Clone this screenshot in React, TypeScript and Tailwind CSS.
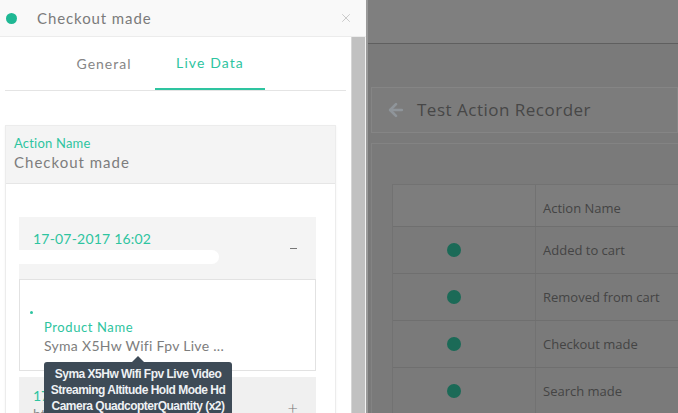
import { ArrowLeft, X } from "lucide-react";

const rows = ["Added to cart", "Removed from cart", "Checkout made", "Search made"];

const SidePanel = () => {
  return (
    <div className="relative w-[366px] h-full flex flex-col bg-white font-['Lato','Noto_Sans',sans-serif]">
      <div className="h-[37px] shrink-0 flex items-center bg-[#f9f9f9] border-b border-[#ececec]">
        <span className="ml-[6px] w-[11px] h-[11px] rounded-full bg-[#1fb894]" />
        <span className="ml-[20px] text-[15px] text-[#7b7b7b] tracking-[0.9px]">Checkout made</span>
        <X className="ml-auto mr-[13px] size-[14px] text-[#c4c4c4]" strokeWidth={1.5} />
      </div>

      <div className="flex flex-1 min-h-0">
        <div className="w-[351px] flex flex-col overflow-hidden">
          <div className="mx-[5px] h-[54px] shrink-0 flex border-b border-[#e4e4e4] pl-[40px]">
            <div className="w-[110px] flex items-center justify-center pl-[8px] text-[14px] text-[#868686] tracking-[1px]">General</div>
            <div className="w-[110px] flex items-center justify-center text-[14px] text-[#2ec4a0] tracking-[1.1px] border-b-2 border-[#2ec4a0]">Live Data</div>
          </div>

          <div className="mt-[34px] mx-[5px] w-[331px] border border-[#ececec] shadow-[0_1px_2px_rgba(0,0,0,0.06)]">
            <div className="h-[58px] bg-[#f4f4f4] border-b border-[#e6e6e6] pl-[8px] pt-[9px]">
              <div className="text-[13px] leading-[17px] text-[#2ec4a0] tracking-[0.2px]">Action Name</div>
              <div className="text-[15px] leading-[20px] text-[#7d7d7d] tracking-[1px]">Checkout made</div>
            </div>
            <div className="pt-[33px] pl-[13px] pr-[19px] pb-[20px] flex flex-col gap-[6px]">
              <div>
                <div className="relative h-[62px] bg-[#f4f4f4]">
                  <div className="pl-[14px] pt-[13px] text-[14px] leading-[18px] text-[#2ec4a0] tracking-[0.2px]">17-07-2017 16:02</div>
                  <div className="mt-[2px] w-[200px] h-[14px] bg-white rounded-r-full" />
                  <span className="absolute right-[19px] top-[31px] w-[7px] h-px bg-[#777]" />
                </div>
                <div className="h-[92px] bg-white border border-[#e2e2e2] relative">
                  <span className="absolute left-[10px] top-[31px] w-[3px] h-[3px] rounded-full bg-[#2ec4a0]" />
                  <div className="pl-[24px] pt-[39px]">
                    <div className="text-[13px] leading-[17px] text-[#2ec4a0] tracking-[0.6px]">Product Name</div>
                    <div className="text-[14px] leading-[20px] text-[#7d7d7d] tracking-[0.3px]">Syma X5Hw Wifi Fpv Live ...</div>
                  </div>
                </div>
              </div>
              <div className="relative h-[62px] bg-[#f0f0f0]">
                <div className="pl-[14px] pt-[10px] text-[14px] leading-[18px] text-[#2ec4a0]">17-07-2017 15:52</div>
                <div className="pl-[14px] text-[14px] leading-[18px] text-[#8a8a8a]">https://syma-store.com/cart</div>
                <span className="absolute right-[18px] top-[21px] text-[18px] leading-none text-[#777] font-light">+</span>
              </div>
            </div>
          </div>
        </div>
        <div className="w-[14px] bg-[#c1c1c1] border-l border-[#d6d6d6]" />
        <div className="w-px bg-[#f3f3f3]" />
      </div>

      <div className="absolute left-[44px] top-[362px] w-[188px] rounded-[3px] bg-[#3e4b57] pt-[4px] pb-[4px] text-center font-['Liberation_Sans',Arial,sans-serif] text-[12px] leading-[16px] font-bold tracking-[-0.5px] whitespace-nowrap text-[#eef1f4]">
        <span className="absolute left-[88px] -top-[6px] w-0 h-0 border-x-[6px] border-x-transparent border-b-[6px] border-b-[#3e4b57]" />
        <div>Syma X5Hw Wifi Fpv Live Video</div>
        <div>Streaming Altitude Hold Mode Hd</div>
        <div>Camera QuadcopterQuantity (x2)</div>
      </div>
    </div>
  );
};

const BackgroundPage = () => {
  return (
    <div className="flex-1 h-full flex flex-col bg-[#7a7a7a] border-l-2 border-[#9a9a9a] font-['Open_Sans','Noto_Sans',sans-serif]">
      <div className="h-[44px] shrink-0 bg-[#7f7f7f] border-b border-[#5f5f5f]" />
      <div className="mt-[43px] ml-[3px] h-[46px] shrink-0 flex items-center bg-[#7c7c7c] border border-[#858585]">
        <ArrowLeft className="ml-[14px] size-[20px] text-[#8f959a]" strokeWidth={3.2} />
        <span className="ml-[11px] text-[17px] text-[#474747] tracking-[0.5px]">Test Action Recorder</span>
      </div>
      <div className="mt-[10px] ml-[3px] flex-1 border-t border-l border-[#838383] pt-[40px] pl-[20px]">
        <div className="border-t border-l border-[#727272]">
          <div className="h-[42px] flex bg-[#7d7d7d] border-b border-[#6f6f6f]">
            <div className="w-[143px] border-r border-[#727272]" />
            <div className="flex items-end pb-[8px] pl-[7px] text-[13px] text-[#444]">Action Name</div>
          </div>
          {rows.map((row) => (
            <div key={row} className="h-[47px] flex border-b border-[#6f6f6f]">
              <div className="w-[143px] flex items-center justify-center border-r border-[#727272]">
                <span className="w-[14px] h-[14px] rounded-full bg-[#1b6a57] mr-[20px]" />
              </div>
              <div className="flex items-center pt-[2px] pl-[7px] text-[13px] text-[#444]">{row}</div>
            </div>
          ))}
        </div>
      </div>
    </div>
  );
};

const App = () => {
  return (
    <div className="w-[678px] h-[413px] flex overflow-hidden">
      <SidePanel />
      <BackgroundPage />
    </div>
  );
};

export default App;
